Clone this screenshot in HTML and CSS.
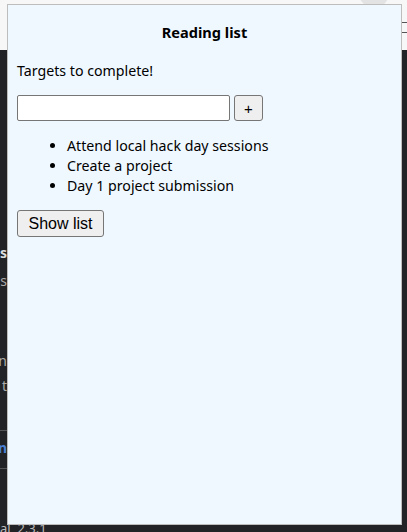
FILE: index.html
```html
<!DOCTYPE html>
<html>
<head>
<meta charset="utf-8">
<link rel="stylesheet" href="styles.css">
</head>
<body>
<div class="backdrop">
  <div class="bd-top">
    <div class="bd-knob"></div>
    <div class="bd-line bd-line-1"></div>
    <div class="bd-line bd-line-2"></div>
  </div>
  <div class="bd-frag f1">is</div>
  <div class="bd-frag f2">is</div>
  <div class="bd-frag f3">n</div>
  <div class="bd-frag f4">t</div>
  <div class="bd-frag f5">n</div>
  <div class="bd-rule r1"></div>
  <div class="bd-rule r2"></div>
  <div class="bd-frag f6">al &nbsp;2.3.1</div>
</div>
<div class="popup">
  <h1 class="title">Reading list</h1>
  <p class="intro">Targets to complete!</p>
  <div class="add-row">
    <input class="task-input" type="text">
    <button class="add-btn">+</button>
  </div>
  <ul class="targets">
    <li>Attend local hack day sessions</li>
    <li>Create a project</li>
    <li>Day 1 project submission</li>
  </ul>
  <button class="show-btn">Show list</button>
</div>
</body>
</html>
```
FILE: styles.css
```css
html, body {
  margin: 0;
  padding: 0;
  width: 407px;
  height: 532px;
  overflow: hidden;
}
body {
  position: relative;
  background: #222326;
  font-family: "Noto Sans", "DejaVu Sans", sans-serif;
}
.backdrop {
  position: absolute;
  inset: 0;
}
.bd-top {
  height: 50px;
  background: #f7f7f7;
  position: relative;
  overflow: hidden;
}
.bd-knob {
  position: absolute;
  right: 18px;
  top: -22px;
  width: 30px;
  height: 30px;
  border-radius: 50%;
  background: #e3e3e3;
}
.bd-line {
  position: absolute;
  right: 0;
  width: 5px;
  height: 1px;
  background: #555;
}
.bd-line-1 { top: 22px; }
.bd-line-2 { top: 32px; }
.bd-frag {
  position: absolute;
  left: 0;
  width: 7px;
  overflow: hidden;
  white-space: nowrap;
  direction: rtl;
  font-size: 14px;
  color: #aaa;
  font-family: "Noto Sans", sans-serif;
}
.f1 { top: 243px; color: #ddd; font-weight: bold; }
.f2 { top: 271px; }
.f3 { top: 351px; }
.f4 { top: 376px; }
.f5 { top: 438px; color: #4a7fd6; font-weight: bold; }
.f6 { top: 519px; width: 60px; direction: ltr; color: #bbb; font-size: 13px; }
.bd-rule {
  position: absolute;
  left: 0;
  width: 7px;
  height: 1px;
  background: #555;
}
.r1 { top: 430px; }
.r2 { top: 468px; }

.popup {
  position: absolute;
  left: 7px;
  top: 4px;
  width: 375px;
  height: 519px;
  background: #f0f8ff;
  border: 1px solid #bdbdbd;
  padding: 0 9px;
  color: #000;
  font-size: 14.2px;
}
.title {
  margin: 17px 0 0;
  text-align: center;
  font-size: 14.6px;
  font-weight: bold;
  line-height: 20px;
}
.intro {
  margin: 19px 0 0;
  line-height: 20px;
}
.add-row {
  display: flex;
  gap: 4px;
  margin-top: 14px;
}
.task-input {
  width: 213px;
  height: 26px;
  box-sizing: border-box;
  border: 1px solid #767676;
  border-radius: 2px;
  background: #fff;
  margin: 0;
  padding: 0 4px;
}
.add-btn {
  width: 29px;
  height: 26px;
  box-sizing: border-box;
  margin: 0;
  padding: 0;
  border: 1px solid #767676;
  border-radius: 3px;
  background: #efefef;
  font-family: "Liberation Sans", Arial, sans-serif;
  font-size: 15px;
  color: #000;
}
.targets {
  margin: 15px 0 0;
  padding-left: 50px;
  line-height: 20px;
}
.show-btn {
  margin-top: 14px;
  width: 87px;
  height: 27px;
  box-sizing: border-box;
  padding: 0;
  border: 1px solid #767676;
  border-radius: 3px;
  background: #efefef;
  font-family: "Liberation Sans", Arial, sans-serif;
  font-size: 16px;
  color: #000;
}
```
